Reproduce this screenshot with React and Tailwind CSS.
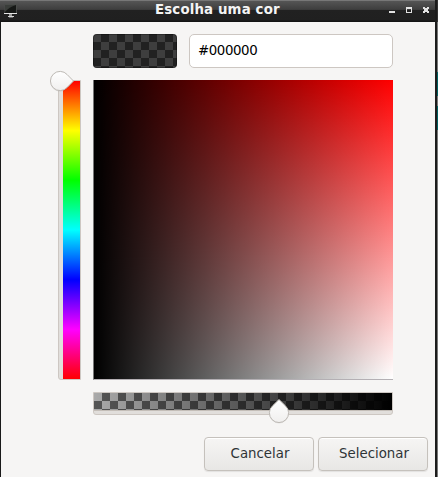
import React from 'react';

function TitleBar() {
  return (
    <header className="relative flex h-[22px] shrink-0 items-center bg-[linear-gradient(to_bottom,#777777_0px,#777777_1px,#555555_1px,#3f3f3f_9px,#383838_10px,#212121_10px,#202020_20px,#141414_21px,#141414_22px)]">
      <svg className="ml-1 h-[15px] w-[14px]" viewBox="0 0 14 15">
        <path d="M0.5 1Q0.5 0 1.5 0H12Q13 0 13 1V9H0.5Z" fill="#4a4c4a" />
        <path d="M1 1H12V9H1Z" fill="#161816" />
        <path d="M1 1H12Q5 3 1 8Z" fill="#3a3d3a" />
        <path d="M0 9H13V10H0Z" fill="#e4e4e4" />
        <path d="M5 10H8V12H5Z" fill="#999" />
        <path d="M4 12H10V13H4Z" fill="#d4d4d4" />
        <path d="M5 13H9V14H5Z" fill="#666" />
      </svg>
      <h1 className="absolute left-[155px] top-px whitespace-nowrap text-[13.33px] font-bold leading-[18px] tracking-[0.15px] text-[#f4f4f4]">
        Escolha uma cor
      </h1>
      <svg className="ml-auto mr-[6px] h-[22px] w-[40px]" viewBox="0 0 40 22" shapeRendering="crispEdges" fill="#e2e2e2">
        <path d="M0 11H6V13H0Z" />
        <path fillRule="evenodd" d="M17 7H23V13H17ZM18 9V12H22V9Z" />
        <path d="M34 7H36V8H38V7H40V9H39V11H40V13H38V12H36V13H34V11H35V9H34Z" />
      </svg>
    </header>
  );
}

function Knob({ id, className, path, viewBox }) {
  return (
    <svg className={className} viewBox={viewBox}>
      <defs>
        <linearGradient id={id} x1="0" y1="0" x2="0" y2="1">
          <stop offset="0" stopColor="#ffffff" />
          <stop offset="1" stopColor="#f0efee" />
        </linearGradient>
      </defs>
      <path d={path} transform="translate(0 1)" fill="#000" opacity="0.08" />
      <path d={path} fill={`url(#${id})`} stroke="#bdb9b4" strokeWidth="1" />
    </svg>
  );
}

function DialogButton({ children }) {
  return (
    <button className="flex h-[34px] w-[110px] items-center justify-center rounded-[4px] border border-[#c5c1bc] bg-linear-to-b from-[#f6f5f4] to-[#e8e7e5] pb-px pl-[2px] text-[13.33px] text-[#2e3436] shadow-[0_1px_1px_rgba(0,0,0,0.08),inset_0_1px_0_#ffffff]">
      {children}
    </button>
  );
}

export default function App() {
  return (
    <div className="flex h-[477px] w-[438px] overflow-hidden bg-[#f6f5f4] font-['DejaVu_Sans',sans-serif]">
      <div className="flex w-[437px] flex-col border-r-2 border-[#1c1c1c]">
        <TitleBar />
        <main className="flex grow flex-col border-l border-[#191919] pt-3">
          <div className="ml-[92px] flex gap-3">
            <div className="h-[34px] w-[84px] rounded-[4px] bg-[conic-gradient(#212121_25%,#3e3e3e_0_50%,#212121_0_75%,#3e3e3e_0)] bg-[size:16px_16px] shadow-[inset_0_0_0_1px_rgba(0,0,0,0.3)]" />
            <div className="flex h-[34px] w-[204px] items-center rounded-[5px] border border-[#cdc7c2] bg-white pb-px pl-2 text-[13.33px] text-black">
              <span className="-tracking-[0.4px]">#000000</span>
            </div>
          </div>

          <div className="ml-[57px] mt-3 flex">
            <div className="relative flex h-[300px] w-[23px] rounded-bl-[3px] border border-[#cdc7c2] bg-[#e1dedb] pl-1">
              <div className="w-[17px] bg-[linear-gradient(to_bottom,#f00,#ff0,#0f0,#0ff,#00f,#f0f,#f00)]" />
              <Knob
                id="hueKnob"
                className="absolute left-[-10px] top-[-11px] h-[24px] w-[28px]"
                viewBox="0 0 28 24"
                path="M24.5 11L18.2 17.4A9.6 9.6 0 1 1 18.2 4.6Z"
              />
            </div>
            <div className="ml-3 h-[300px] w-[300px] border-b border-l border-b-[#b4b0b4] border-l-[#777] bg-[linear-gradient(to_right,#000,transparent),linear-gradient(to_bottom,#f00,#fff)]" />
          </div>

          <div className="relative ml-[92px] mt-3 h-[23px] w-[300px] rounded-b-[3px] border border-[#cdc7c2] bg-[#e1dedb]">
            <div className="h-[17px] bg-[linear-gradient(to_right,transparent,#000),conic-gradient(#555_25%,#aaa_0_50%,#555_0_75%,#aaa_0)] bg-[size:100%_100%,16px_16px]" />
            <div className="h-px bg-[#c4beb8]" />
            <Knob
              id="alphaKnob"
              className="absolute left-[173px] top-[4px] h-[28px] w-[24px]"
              viewBox="0 0 24 28"
              path="M12 2.5L18.4 8.8A9.6 9.6 0 1 1 5.6 8.8Z"
            />
          </div>

          <div className="ml-[203px] mt-[22px] flex gap-1">
            <DialogButton>Cancelar</DialogButton>
            <DialogButton>Selecionar</DialogButton>
          </div>
        </main>
      </div>
      <div className="w-px bg-[linear-gradient(to_bottom,#333_0px,#333_22px,#777_22px,#777_72px,#006060_72px,#006060_96px,#777_96px,#777_106px,#006060_106px,#006060_130px,#777_130px)]" />
    </div>
  );
}
